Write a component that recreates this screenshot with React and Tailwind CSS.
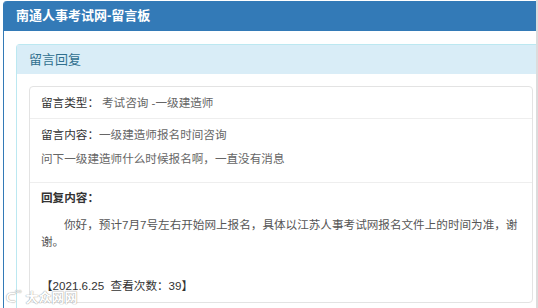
export default function App() {
  const font = { fontFamily: '"Liberation Sans", "Noto Sans CJK SC", sans-serif' }

  return (
    <div className="relative flex w-[538px] h-[308px] overflow-hidden bg-white" style={font}>
      <div className="flex-1 pl-[3px] pt-[1px]">
        <div className="h-full border-l border-[#337ab7] rounded-tl-[4px] flex flex-col">
          <div className="h-[30px] bg-[#337ab7] rounded-tl-[3px] flex items-center pl-[12px] text-white font-bold text-[13px]">
            南通人事考试网-留言板
          </div>
          <div className="flex-1 pl-[12px] pt-[13px]">
            <div className="h-full border-l border-t border-[#bce8f1] rounded-tl-[4px] flex flex-col">
              <div className="h-[29px] bg-[#d9edf7] flex items-center pl-[12px] text-[#31708f] text-[13px]">
                留言回复
              </div>
              <div className="flex-1 pl-[12px] pr-[3px] pt-[12px]">
                <div className="border border-[#e3e3e3] rounded-[4px] text-[11.6px] leading-[15px]">
                  <div className="px-[11px] py-[8px] border-b border-[#eeeeee]">
                    <span className="text-[#333]">留言类型：</span>
                    <span className="text-[#666] ml-[3px]">考试咨询 -一级建造师</span>
                  </div>
                  <div className="px-[11px] pt-[8px] pb-[15px] border-b border-[#eeeeee] leading-[16px]">
                    <p>
                      <span className="text-[#333]">留言内容：</span>
                      <span className="text-[#666]">一级建造师报名时间咨询</span>
                    </p>
                    <p className="mt-[8px] text-[#666]">问下一级建造师什么时候报名啊，一直没有消息</p>
                  </div>
                  <div className="px-[11px] pt-[7px] pb-[8px]">
                    <p className="leading-[16px] font-semibold text-[#333]">回复内容：</p>
                    <p className="mt-[10px] leading-[17px] indent-[23px] text-[#555]">
                      你好，预计7月7号左右开始网上报名，具体以江苏人事考试网报名文件上的时间为准，谢谢。
                    </p>
                    <p className="mt-[27px] leading-[17px] text-[#333]">【2021.6.25&nbsp;&nbsp;查看次数：39】</p>
                  </div>
                </div>
              </div>
            </div>
          </div>
        </div>
      </div>
      <div className="w-[2px] bg-[#dcdcdc]" />
      <div className="absolute left-[6px] top-[288px] flex items-center gap-[4px] text-white text-[13px] font-bold opacity-80 [text-shadow:0_0_1px_#888,0_0_1px_#888]">
        <span>ᑕ</span>
        <span className="text-[8px] -mt-[8px] -ml-[4px]">°°</span>
        <span>大众网网</span>
      </div>
    </div>
  )
}
